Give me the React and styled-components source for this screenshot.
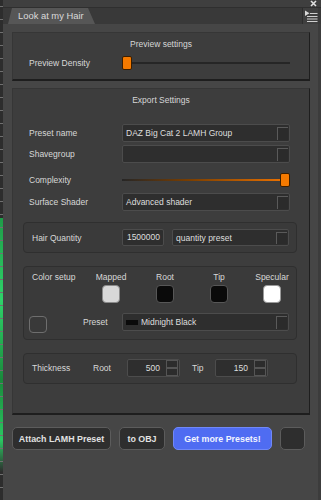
import React from 'react';
import styled, { createGlobalStyle } from 'styled-components';

const Global = createGlobalStyle`
  html, body { margin: 0; padding: 0; background: #464646; }
  body {
    font-family: "Liberation Sans", Arial, sans-serif;
    font-size: 8.5px;
    color: #d8d8d8;
  }
  * { box-sizing: border-box; }
`;

const Frame = styled.div`
  width: 321px;
  height: 500px;
  display: flex;
  overflow: hidden;
  background: #464646;
`;

const Ruler = styled.div`
  width: 3px;
  flex: none;
  background:
    repeating-linear-gradient(to bottom, transparent 0 6px, #707070 6px 7px, transparent 7px 13px),
    linear-gradient(to bottom, transparent 0 218px, #1f9c48 218px, #2fd36a 300px, #1a8a3c 380px, #2bc862 440px, transparent 472px),
    #2d2d2d;
`;

const Main = styled.div`
  flex: 1;
  display: flex;
  flex-direction: column;
  min-width: 0;
`;

const TopStrip = styled.div`
  height: 8px;
  background: #3f3f3f;
  border-bottom: 1px solid #2f2f2f;
  display: flex;
  justify-content: flex-end;
  align-items: center;
  padding-right: 4px;
`;

const TabBar = styled.div`
  height: 16px;
  background: #393939;
  display: flex;
  align-items: stretch;
  padding-left: 5px;
`;

const Tab = styled.div`
  width: 87px;
  background: #565656;
  clip-path: polygon(4px 0, 80px 0, 87px 100%, 0 100%);
  font-size: 9.4px;
  line-height: 16px;
  color: #dadada;
  padding-left: 10px;
  white-space: nowrap;
`;

const MenuButton = styled.div`
  margin-left: auto;
  width: 16px;
  margin-right: 3px;
  background: #3f3f3f;
  border-left: 1px solid #2c2c2c;
  display: flex;
  align-items: center;
  justify-content: center;
`;

const Content = styled.div`
  flex: 1;
  display: flex;
  flex-direction: column;
  padding: 8px 8px 0 9px;
  border-right: 3px solid #3c3c3c;
`;

const Panel = styled.div`
  background: #3d3d3d;
  border: 1px solid #363636;
  border-right-color: #1e1e1e;
  border-bottom: 2px solid #1e1e1e;
  margin-top: ${p => p.$mt || 0}px;
  height: ${p => p.$h}px;
  padding-top: 6px;
  display: flex;
  flex-direction: column;
`;

const Title = styled.div`
  text-align: center;
  line-height: 10px;
  color: #d6d6d6;
`;

const Row = styled.div`
  display: grid;
  grid-template-columns: 93px 168px;
  align-items: center;
  padding-left: 16px;
  height: ${p => p.$h || 18}px;
  margin-top: ${p => p.$mt || 0}px;
`;

const Label = styled.div`
  color: #d8d8d8;
  line-height: 10px;
  white-space: nowrap;
`;

const SliderWrap = styled.div`
  position: relative;
  height: 14px;
  display: flex;
  align-items: center;
`;

const Track = styled.div`
  height: 2px;
  width: 100%;
  margin-left: ${p => p.$ml || 0}px;
  background: ${p => p.$fill
    ? 'linear-gradient(to right, #262626 0%, #7a3e00 40%, #e87000 95%)'
    : '#262626'};
`;

const Handle = styled.div`
  position: absolute;
  top: 0;
  width: 10px;
  height: 14px;
  background: #f57a00;
  border: 1px solid #3a1e00;
  border-radius: 2px;
`;

function Slider({ value, fill, ml }) {
  return (
    <SliderWrap>
      <Track $fill={fill} $ml={ml} />
      <Handle style={{ left: `calc(${value}% - ${value / 10}px)` }} />
    </SliderWrap>
  );
}

const Combo = styled.div`
  position: relative;
  height: ${p => p.$h || 18}px;
  width: ${p => p.$w ? `${p.$w}px` : 'auto'};
  background: #2e2e2e;
  border: 1px solid #4c4c4c;
  border-radius: 2px;
  display: flex;
  align-items: center;
  padding-left: 3px;
  color: #dedede;
  line-height: 10px;
  white-space: nowrap;
`;

const Arrow = styled.div`
  position: absolute;
  right: 1px;
  top: 2px;
  bottom: 1px;
  width: 11px;
  border-left: 1px solid #5a5a5a;
  border-top: 1px solid #5a5a5a;
  background: #2b2b2b;
`;

const ColorChip = styled.span`
  width: 12px;
  height: 5px;
  background: #0a0a0a;
  margin-right: 3px;
  flex: none;
`;

const SubBox = styled.div`
  margin: ${p => p.$mt || 0}px 12px 0 10px;
  height: ${p => p.$h}px;
  border: 1px solid #2f2f2f;
  border-radius: 4px;
  background: #3a3a3a;
  padding: ${p => p.$pad};
`;

const FlexRow = styled.div`
  display: flex;
  align-items: center;
  height: ${p => p.$h || 18}px;
  margin-top: ${p => p.$mt || 0}px;
`;

const FixedLabel = styled(Label)`
  width: ${p => p.$w}px;
  flex: none;
  margin-left: ${p => p.$ml || 0}px;
`;

const NumberBox = styled.div`
  width: ${p => p.$w}px;
  height: 17px;
  flex: none;
  background: #2e2e2e;
  border: 1px solid #4c4c4c;
  border-radius: 2px;
  text-align: right;
  padding-right: 3px;
  line-height: 15px;
  color: #dedede;
  margin-right: ${p => p.$mr || 0}px;
`;

const SpinBox = styled.div`
  width: 53px;
  height: 18px;
  flex: none;
  display: flex;
  background: #2e2e2e;
  border: 1px solid #4c4c4c;
  border-radius: 2px;
  margin-right: ${p => p.$mr || 0}px;
`;

const SpinValue = styled.div`
  flex: 1;
  text-align: right;
  padding-right: 6px;
  line-height: 16px;
  color: #dedede;
`;

const SpinButtons = styled.div`
  width: 12px;
  margin: 0 1px 0 0;
  display: flex;
  flex-direction: column;
`;

const SpinHalf = styled.div`
  flex: 1;
  border: 1px solid #555;
  background: #2c2c2c;
`;

const ColorGrid = styled.div`
  display: grid;
  grid-template-columns: 52px 54px 54px 54px 52px;
  grid-template-rows: 10px 17px;
  row-gap: 3px;
  padding-left: 3px;
  justify-items: center;
  align-items: center;
`;

const HeadLabel = styled(Label)`
  justify-self: ${p => p.$left ? 'start' : 'center'};
`;

const Swatch = styled.div`
  width: 18px;
  height: 18px;
  border-radius: 4px;
  background: ${p => p.$c};
  border: 1px solid ${p => p.$b};
`;

const SquareBtn = styled.div`
  width: 18px;
  height: 17px;
  flex: none;
  border: 1px solid #6e6e6e;
  border-radius: 4px;
  background: #393939;
  align-self: flex-end;
  margin-bottom: -1px;
`;

const ButtonBar = styled.div`
  display: flex;
  gap: 8px;
  margin-top: 12px;
`;

const Button = styled.div`
  width: ${p => p.$w}px;
  height: 23px;
  flex: none;
  border-radius: 5px;
  border: 1px solid ${p => p.$blue ? '#7088f8' : '#5c5c5c'};
  background: ${p => p.$blue ? '#4f6cf2' : '#2e2e2e'};
  color: ${p => p.$blue ? '#f2f4ff' : '#e2e2e2'};
  font-weight: bold;
  font-size: 8.9px;
  display: flex;
  align-items: center;
  justify-content: center;
  white-space: nowrap;
`;

const CloseIcon = () => (
  <svg width="7" height="7" viewBox="0 0 7 7">
    <path d="M1 1L6 6M6 1L1 6" stroke="#e0e0e0" strokeWidth="1.6" />
  </svg>
);

const MenuIcon = () => (
  <svg width="14" height="13" viewBox="0 0 14 13">
    <path d="M1 0.5L1 6L5.5 3.2Z" fill="#d8d8d8" />
    <path d="M6 3.5H13.5M3 6.5H13.5M3 9H13.5M3 11.5H13.5" stroke="#cfcfcf" strokeWidth="1.2" />
  </svg>
);

export default function App() {
  return (
    <>
      <Global />
      <Frame>
        <Ruler />
        <Main>
          <TopStrip><CloseIcon /></TopStrip>
          <TabBar>
            <Tab>Look at my Hair</Tab>
            <MenuButton><MenuIcon /></MenuButton>
          </TabBar>
          <Content>
            <Panel $h={49}>
              <Title>Preview settings</Title>
              <Row $h={14} $mt={7}>
                <Label>Preview Density</Label>
                <Slider value={0} ml={4} />
              </Row>
            </Panel>

            <Panel $mt={7} $h={327}>
              <Title>Export Settings</Title>
              <Row $mt={19}>
                <Label>Preset name</Label>
                <Combo>DAZ Big Cat 2 LAMH Group<Arrow /></Combo>
              </Row>
              <Row $mt={3}>
                <Label>Shavegroup</Label>
                <Combo><Arrow /></Combo>
              </Row>
              <Row $h={14} $mt={10}>
                <Label>Complexity</Label>
                <Slider value={100} fill />
              </Row>
              <Row $mt={6}>
                <Label>Surface Shader</Label>
                <Combo>Advanced shader<Arrow /></Combo>
              </Row>

              <SubBox $mt={11} $h={31} $pad="6px 7px 5px 8px">
                <FlexRow $h={17}>
                  <FixedLabel $w={90}>Hair Quantity</FixedLabel>
                  <NumberBox $w={42} $mr={8}>1500000</NumberBox>
                  <Combo $w={117} $h={17}>quantity preset<Arrow /></Combo>
                </FlexRow>
              </SubBox>

              <SubBox $mt={13} $h={74} $pad="5px 7px 5px 5px">
                <ColorGrid>
                  <HeadLabel $left>Color setup</HeadLabel>
                  <HeadLabel>Mapped</HeadLabel>
                  <HeadLabel>Root</HeadLabel>
                  <HeadLabel>Tip</HeadLabel>
                  <HeadLabel>Specular</HeadLabel>
                  <span />
                  <Swatch $c="#d8d8d8" $b="#8a8a8a" />
                  <Swatch $c="#0a0a0a" $b="#575757" />
                  <Swatch $c="#0a0a0a" $b="#575757" />
                  <Swatch $c="#ffffff" $b="#9a9a9a" />
                </ColorGrid>
                <FlexRow $h={20} $mt={10}>
                  <SquareBtn />
                  <FixedLabel $w={39} $ml={36}>Preset</FixedLabel>
                  <Combo $w={167}><ColorChip />Midnight Black<Arrow /></Combo>
                </FlexRow>
              </SubBox>

              <SubBox $mt={13} $h={31} $pad="5px 7px 5px 8px">
                <FlexRow $h={18}>
                  <FixedLabel $w={61}>Thickness</FixedLabel>
                  <FixedLabel $w={34}>Root</FixedLabel>
                  <SpinBox $mr={12}>
                    <SpinValue>500</SpinValue>
                    <SpinButtons><SpinHalf /><SpinHalf /></SpinButtons>
                  </SpinBox>
                  <FixedLabel $w={23}>Tip</FixedLabel>
                  <SpinBox>
                    <SpinValue>150</SpinValue>
                    <SpinButtons><SpinHalf /><SpinHalf /></SpinButtons>
                  </SpinBox>
                </FlexRow>
              </SubBox>
            </Panel>

            <ButtonBar>
              <Button $w={99}>Attach LAMH Preset</Button>
              <Button $w={46}>to OBJ</Button>
              <Button $w={99} $blue>Get more Presets!</Button>
              <Button $w={25} />
            </ButtonBar>
          </Content>
        </Main>
      </Frame>
    </>
  );
}
